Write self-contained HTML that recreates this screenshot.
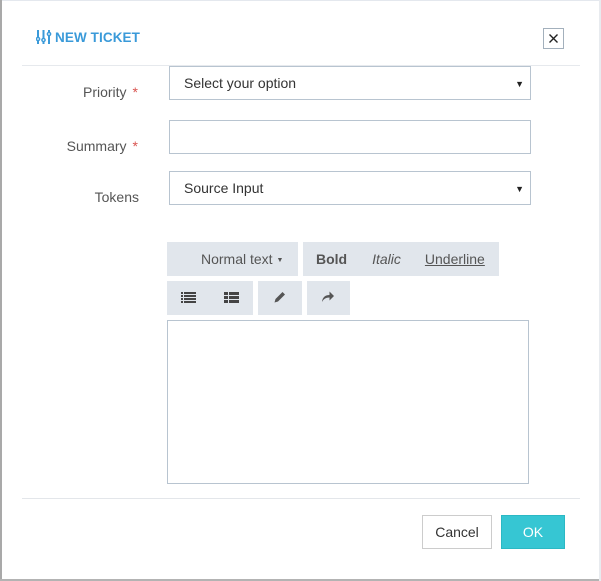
<!DOCTYPE html>
<html><head><style>
body{margin:0;width:601px;height:581px;background:#fff;font-family:"Liberation Sans",sans-serif;position:relative;overflow:hidden}
.a{position:absolute}
.lbl{font-size:14px;color:#555;text-align:right;width:120px;left:18px}
.req{color:#d9534f;margin-left:6px}
.inp{border:1px solid #b8c4d0;background:#fff;box-sizing:border-box;font-size:14px;color:#333;padding-left:14px;line-height:32px}
.arr{position:absolute;right:6px;top:1px;font-size:9px;color:#222;line-height:32px}
.tb{background:#e1e6ec;font-size:14px;color:#555;box-sizing:border-box;line-height:34px}
</style></head><body>
<div class="a" style="left:0;top:0;width:601px;height:1px;background:#e4e8ee"></div>
<div class="a" style="left:0;top:0;width:2px;height:581px;background:#a9a9a9"></div>
<div class="a" style="left:0;top:579px;width:601px;height:2px;background:#b3b3b3"></div>
<div class="a" style="left:599px;top:0;width:2px;height:581px;background:#e8ebef"></div>

<svg class="a" style="left:36px;top:29px" width="16" height="16" viewBox="0 0 16 16" fill="none" stroke="#3a9ad9" stroke-width="2">
<line x1="2" y1="1" x2="2" y2="15"/><line x1="7.5" y1="1" x2="7.5" y2="15"/><line x1="13" y1="1" x2="13" y2="15"/>
<circle cx="2" cy="10" r="1.6" fill="#fff" stroke-width="1.5"/><circle cx="7.5" cy="11" r="1.6" fill="#fff" stroke-width="1.5"/><circle cx="13" cy="5" r="1.6" fill="#fff" stroke-width="1.5"/></svg>
<div class="a" style="left:55px;top:30px;font-size:13.5px;font-weight:bold;color:#3a9ad9;letter-spacing:0.1px">NEW TICKET</div>
<div class="a" style="left:543px;top:28px;width:21px;height:21px;border:1px solid #a3b0bc;box-sizing:border-box"></div>
<svg class="a" style="left:548px;top:33px" width="11" height="11"><path d="M1.5 1.5 L9.5 9.5 M9.5 1.5 L1.5 9.5" stroke="#222" stroke-width="1.4"/></svg>
<div class="a" style="left:22px;top:65px;width:558px;height:1px;background:#e6e9ed"></div>

<div class="a lbl" style="top:84px">Priority<span class="req">*</span></div>
<div class="a inp" style="left:169px;top:66px;width:362px;height:34px">Select your option<span class="arr">▼</span></div>
<div class="a lbl" style="top:138px">Summary<span class="req">*</span></div>
<div class="a inp" style="left:169px;top:120px;width:362px;height:34px"></div>
<div class="a lbl" style="top:189px;width:121px">Tokens</div>
<div class="a inp" style="left:169px;top:171px;width:362px;height:34px">Source Input<span class="arr">▼</span></div>

<div class="a tb" style="left:167px;top:242px;width:131px;height:34px;padding-left:34px">Normal text <span style="font-size:7px;vertical-align:2px">▼</span></div>
<div class="a tb" style="left:303px;top:242px;width:196px;height:34px"><b style="margin-left:13px">Bold</b><i style="margin-left:25px">Italic</i><u style="margin-left:24px">Underline</u></div>
<div class="a tb" style="left:167px;top:281px;width:86px;height:34px"></div>
<div class="a tb" style="left:258px;top:281px;width:44px;height:34px"></div>
<div class="a tb" style="left:307px;top:281px;width:43px;height:34px"></div>
<svg class="a" style="left:181px;top:292px" width="15" height="12"><g fill="#444"><rect x="0" y="0" width="2" height="2"/><rect x="3" y="0" width="12" height="2"/><rect x="0" y="3" width="2" height="2"/><rect x="3" y="3" width="12" height="2"/><rect x="0" y="6" width="2" height="2"/><rect x="3" y="6" width="12" height="2"/><rect x="0" y="9" width="2" height="2"/><rect x="3" y="9" width="12" height="2"/></g></svg>
<svg class="a" style="left:224px;top:292px" width="15" height="12"><g fill="#444"><rect x="0" y="0" width="4" height="3"/><rect x="5" y="0" width="10" height="3"/><rect x="0" y="4" width="4" height="3"/><rect x="5" y="4" width="10" height="3"/><rect x="0" y="8" width="4" height="3"/><rect x="5" y="8" width="10" height="3"/></g></svg>
<svg class="a" style="left:273px;top:290px" width="14" height="14"><path d="M1.5 12.5 L2.5 9 L9.5 2 L12 4.5 L5 11.5 Z" fill="#555"/></svg>
<svg class="a" style="left:321px;top:290px" width="14" height="13"><path d="M1 12 C1.5 7 4.5 5 8.5 5 L8.5 1.5 L13 6 L8.5 10.5 L8.5 7.5 C5 7.5 2.5 9 1 12 Z" fill="#555"/></svg>

<div class="a" style="left:167px;top:320px;width:362px;height:164px;border:1px solid #b8c4d0;box-sizing:border-box"></div>
<div class="a" style="left:22px;top:498px;width:558px;height:1px;background:#e3e6ea"></div>
<div class="a" style="left:422px;top:515px;width:70px;height:34px;border:1px solid #ccc;box-sizing:border-box;text-align:center;line-height:32px;font-size:14px;color:#333">Cancel</div>
<div class="a" style="left:501px;top:515px;width:64px;height:34px;background:#36c6d3;border:1px solid #2bb8c4;box-sizing:border-box;text-align:center;line-height:32px;font-size:14px;color:#fff">OK</div>
</body></html>
